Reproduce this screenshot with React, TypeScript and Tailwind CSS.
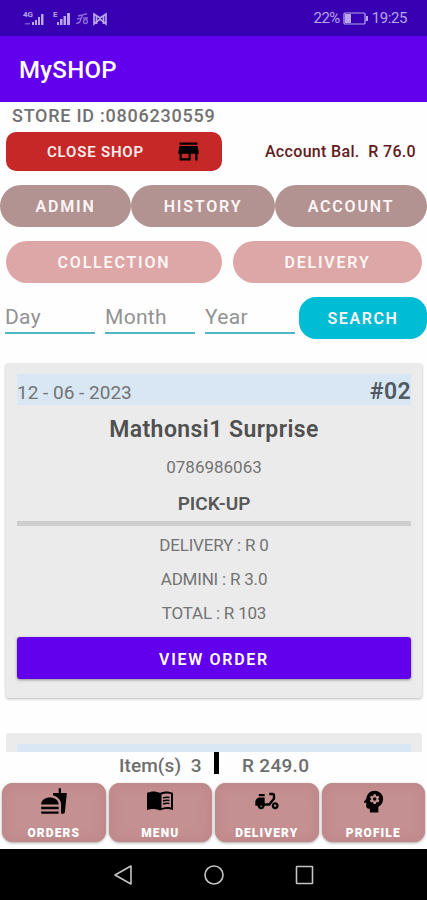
import type { ReactNode } from "react";
import { MdDeliveryDining, MdFastfood, MdPsychology, MdStore } from "react-icons/md";

const costs = ["DELIVERY : R 0", "ADMINI : R 3.0", "TOTAL : R 103"];

const tabs = [
  { label: "ORDERS", icon: <MdFastfood size={28} /> },
  { label: "MENU", icon: <BookIcon /> },
  { label: "DELIVERY", icon: <MdDeliveryDining size={28} /> },
  { label: "PROFILE", icon: <MdPsychology size={29} /> }
];

function BookIcon() {
  return (
    <svg width="26" height="22" viewBox="0 0 26 22" fill="currentColor">
      <path d="M0 3C4 1 9 1 13 3c4-2 9-2 13 0v17c-4-1.500-9-1.500-13 0.500C9 18.500 4 18.500 0 20z" />
      <path d="M14.500 4.500c3-1.300 6.500-1.300 9.500-0.500v13.500c-3-.8-6.500-.5-9.500.8z" fill="#c59092" />
      <path
        d="M16 8c2-.8 4-.9 6.500-.6M16 11c2-.8 4-.9 6.500-.6M16 14c2-.8 4-.9 6.500-.6"
        fill="none"
        stroke="currentColor"
        strokeWidth="1.500"
      />
    </svg>
  );
}

function StatusBar() {
  return (
    <div className="flex h-9 shrink-0 items-center justify-between bg-[#3700b3] pr-5 pl-[23px] text-[#b9a6ea]">
      <svg width="86" height="16" viewBox="0 0 86 16" fill="currentColor">
        <text x="0" y="7" fontSize="8" fontWeight="700" fontFamily="Roboto, sans-serif">4G</text>
        <path d="M9 12h2v3H9zM12 10h2v5h-2zM15 7h2v8h-2zM18 4h2.500v11H18z" />
        <path d="M2 13h5v1.500H2z" opacity=".5" />
        <text x="30" y="7" fontSize="8" fontWeight="700" fontFamily="Roboto, sans-serif">E</text>
        <path d="M34 12h2v3h-2zM37 9h2.500v6H37zM40.500 6H43v9h-2.500zM44 3h3v12h-3z" />
        <g fill="none" stroke="currentColor" strokeWidth="1.300" opacity=".65">
          <path d="M55 6l4-1M54 9l5-1M53 13c3 1 4-1 5-4s1-5 6-5M60 8h5" />
          <circle cx="62.500" cy="11.500" r="2" />
        </g>
        <g fill="none" stroke="currentColor" strokeWidth="1.700">
          <path d="M71 14V4l6 4 6-4v10l-6-5z" />
          <path d="M73.500 14V6M80.500 14V6" />
        </g>
      </svg>
      <div className="flex items-center gap-[3px] text-[15px] leading-4">
        <span className="tracking-[-0.6px]">22%</span>
        <svg width="26" height="13" viewBox="0 0 26 13" fill="none">
          <rect x="1" y="1" width="21" height="11" rx="1" stroke="currentColor" strokeWidth="1.200" />
          <path d="M2 2h6v9H2zM23 4h2v5h-2z" fill="currentColor" />
        </svg>
        <span className="tracking-[-0.4px]">19:25</span>
      </div>
    </div>
  );
}

function Pill({ className, children }: { className: string; children: ReactNode }) {
  return (
    <button
      type="button"
      className={`flex h-[42px] items-center justify-center pt-0.5 text-base font-semibold text-[#fdf6f4] ${className}`}
    >
      {children}
    </button>
  );
}

function DateField({ label }: { label: string }) {
  return (
    <div className="h-[37px] w-[90px] border-b-2 border-[#4fb6c4] text-[21px] leading-[41px] tracking-[0.3px] text-[#929292]">
      {label}
    </div>
  );
}

function OrderCard() {
  return (
    <section className="h-[335px] rounded-[3px] bg-[#ebebeb] px-[11px] pt-[11px] text-center text-[#737373] shadow-[0_1px_3px_rgba(0,0,0,0.28)]">
      <div className="flex h-[31px] items-center justify-between bg-[#d8e7f3]">
        <span className="pt-[5px] text-[19px] leading-none">12 - 06 - 2023</span>
        <span className="pt-[3px] text-[23px] leading-none font-semibold tracking-[0.4px] text-[#525a61]">#02</span>
      </div>
      <h2 className="mt-[11px] text-[23px] leading-7 font-semibold tracking-[0.42px] text-[#505050]">
        Mathonsi1 Surprise
      </h2>
      <p className="mt-[13px] text-[17px] leading-5">0786986063</p>
      <p className="mt-4 text-[19px] leading-[22px] font-semibold text-[#585858]">PICK-UP</p>
      <div className="mt-1.5 h-[5px] bg-[#cecece]" />
      <div className="mt-[9px] flex flex-col gap-3.5 text-[17px] leading-5 tracking-[-0.2px]">
        {costs.map((cost) => (
          <p key={cost}>{cost}</p>
        ))}
      </div>
      <button
        type="button"
        className="mt-3.5 h-[42px] w-full rounded-[3px] bg-[#6200ee] pt-[3px] text-base font-semibold tracking-[1.7px] text-white shadow-[0_1px_3px_rgba(0,0,0,0.4)]"
      >
        VIEW ORDER
      </button>
    </section>
  );
}

function SystemNav() {
  return (
    <div className="flex h-[51px] shrink-0 items-center justify-center gap-[71px] bg-black text-[#c4c4c4]">
      <svg width="20" height="22" viewBox="0 0 20 22" fill="none" stroke="currentColor" strokeWidth="1.600">
        <path d="M18 2v18L2 11z" strokeLinejoin="round" />
      </svg>
      <svg width="20" height="20" viewBox="0 0 20 20" fill="none" stroke="currentColor" strokeWidth="1.600">
        <circle cx="10" cy="10" r="9" />
      </svg>
      <svg width="20" height="20" viewBox="0 0 20 20" fill="none" stroke="currentColor" strokeWidth="1.600">
        <rect x="1.500" y="1.500" width="16" height="17" rx="0.500" />
      </svg>
    </div>
  );
}

export default function App() {
  return (
    <div className="flex h-[900px] w-[427px] flex-col overflow-hidden bg-[#fefefe] font-['Roboto',sans-serif]">
      <StatusBar />
      <header className="flex h-[66px] shrink-0 items-center bg-[#6200ee] pt-0.5 pl-[19px] text-2xl font-medium tracking-[0.3px] text-white">
        MySHOP
      </header>

      <main className="flex min-h-0 flex-1 flex-col">
        <p className="h-[30px] pl-3 text-lg leading-7 font-medium tracking-[0.75px] text-[#717171]">
          STORE ID :0806230559
        </p>
        <div className="flex h-[39px] shrink-0 items-center justify-between pr-[11px] pl-1.5">
          <button
            type="button"
            className="flex h-[39px] w-[216px] items-center justify-between rounded-[10px] bg-[#c62828] pr-5 pl-[41px] text-[15px] font-semibold tracking-[0.8px] text-[#fdeeee]"
          >
            <span className="pt-0.5">CLOSE SHOP</span>
            <MdStore size={27} className="text-black" />
          </button>
          <span className="text-base font-medium tracking-[0.33px] whitespace-pre text-[#631a20]">
            Account Bal.  R 76.0
          </span>
        </div>

        <div className="mt-3.5 flex tracking-[1.8px]">
          <Pill className="w-[131px] rounded-[21px] bg-[#b39292]">ADMIN</Pill>
          <Pill className="w-36 rounded-[21px] bg-[#b39292]">HISTORY</Pill>
          <Pill className="w-[152px] rounded-[21px] bg-[#b39292]">ACCOUNT</Pill>
        </div>
        <div className="mt-3.5 flex gap-[11px] pl-1.5 tracking-[1.8px]">
          <Pill className="w-[216px] rounded-[21px] bg-[#dda6a7]">COLLECTION</Pill>
          <Pill className="w-[189px] rounded-[21px] bg-[#dda6a7]">DELIVERY</Pill>
        </div>
        <div className="mt-3.5 flex gap-2.5 pl-[5px] tracking-[1.6px]">
          <DateField label="Day" />
          <DateField label="Month" />
          <DateField label="Year" />
          <Pill className="-ml-1.5 w-32 rounded-[17px] bg-[#00bcd4]">SEARCH</Pill>
        </div>

        <div className="mt-6 flex min-h-0 flex-1 flex-col gap-[35px] overflow-hidden pr-[5px] pl-1.5">
          <div className="shrink-0">
            <OrderCard />
          </div>
          <div className="h-[335px] shrink-0 rounded-[3px] bg-[#ebebeb] px-[11px] pt-[11px]">
            <div className="h-[31px] bg-[#d8e7f3]" />
          </div>
        </div>
      </main>

      <div className="flex h-[31px] shrink-0 text-[19px] leading-[27px] font-medium text-[#6d6d6d]">
        <span className="w-[214px] pl-[119px] tracking-[0.1px] whitespace-pre">Item(s)  3</span>
        <span className="h-[22px] w-[5px] bg-black" />
        <span className="pl-[23px] tracking-[0.3px]">R 249.0</span>
      </div>

      <nav className="grid h-[66px] shrink-0 grid-cols-4 gap-[3px] px-0.5">
        {tabs.map((tab) => (
          <button
            key={tab.label}
            type="button"
            className="flex h-[59px] flex-col items-center justify-between rounded-[11px] bg-[#c59092] pt-1 pb-[3px] text-xs font-black tracking-[1.1px] text-white shadow-[inset_0_0_8px_5px_#bf898b,0_1px_3px_rgba(0,0,0,0.35)]"
          >
            <span className="flex h-7 items-center text-black">{tab.icon}</span>
            <span className="leading-3">{tab.label}</span>
          </button>
        ))}
      </nav>
      <SystemNav />
    </div>
  );
}
